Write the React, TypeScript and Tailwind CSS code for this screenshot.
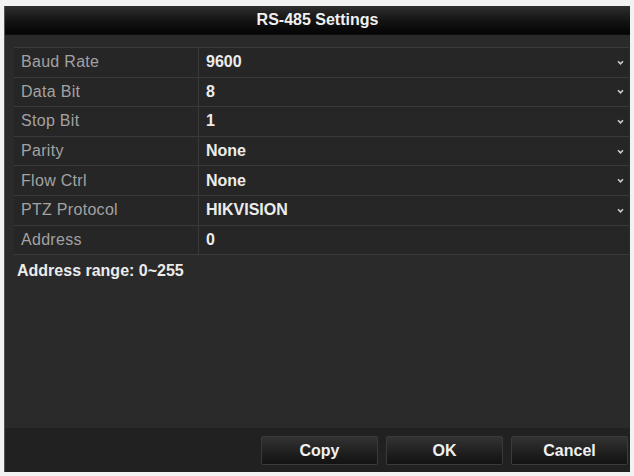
import React from "react";

const rows: [string, string, boolean][] = [
  ["Baud Rate", "9600", true],
  ["Data Bit", "8", true],
  ["Stop Bit", "1", true],
  ["Parity", "None", true],
  ["Flow Ctrl", "None", true],
  ["PTZ Protocol", "HIKVISION", true],
  ["Address", "0", false],
];

function Chevron() {
  return (
    <svg width="7" height="5" viewBox="0 0 7 5" className="shrink-0">
      <path d="M1 1.2 L3.5 3.8 L6 1.2" fill="none" stroke="#cfcfcf" strokeWidth="1.5" />
    </svg>
  );
}

export default function App() {
  return (
    <div
      className="w-[634px] h-[476px] bg-[#f2f2f2] pt-[6px] pl-[4px]"
      style={{ fontFamily: '"Liberation Sans", Arial, sans-serif' }}
    >
      <div className="w-[626px] h-[466px] flex flex-col bg-[#2a2a2a] border-l border-[#555]">
        <div className="h-[29px] shrink-0 flex items-center justify-center bg-gradient-to-b from-[#2f2f2f] via-[#151515] to-[#050505] border-b border-[#0c0c0c]">
          <span className="text-[16px] font-bold text-[#f0f0f0]">RS-485 Settings</span>
        </div>
        <div className="flex-1 flex flex-col pt-[12px] pl-[9px] pr-[1px]">
          <div className="flex flex-col border-t border-[#3a3a3a]">
            {rows.map(([label, value, drop]) => (
              <div key={label} className="h-[29.6px] flex border-b border-[#3a3a3a] bg-[#262626]">
                <div className="w-[185px] shrink-0 flex items-center pl-[7px] border-r border-[#3a3a3a] text-[16px] text-[#a2a2a2] tracking-[0.3px]">
                  {label}
                </div>
                <div className="flex-1 flex items-center justify-between pl-[7px] pr-[5px] text-[16px] font-bold text-[#ececec]">
                  <span>{value}</span>
                  {drop && <Chevron />}
                </div>
              </div>
            ))}
          </div>
          <div className="pt-[4px] pl-[3px] text-[16px] font-bold text-[#ececec]">Address range: 0~255</div>
        </div>
        <div className="h-[44px] shrink-0 bg-[#212121] flex items-center justify-end gap-[8px] pr-[2px] pt-[1px]">
          {["Copy", "OK", "Cancel"].map((b) => (
            <div
              key={b}
              className="w-[117px] h-[29px] flex items-center justify-center rounded-[2px] bg-gradient-to-b from-[#333] to-[#121212] border border-[#3a3a3a] text-[16px] font-bold text-[#f0f0f0]"
            >
              {b}
            </div>
          ))}
        </div>
      </div>
    </div>
  );
}
